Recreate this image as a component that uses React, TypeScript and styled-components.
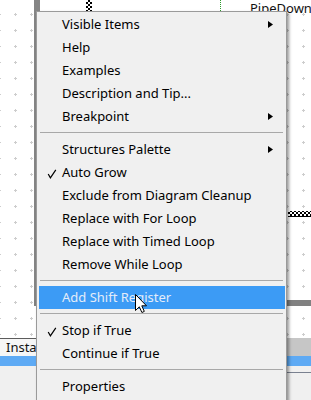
import React from 'react';
import styled, {createGlobalStyle} from "styled-components";

type Entry = {
    label?: string
    sub?: boolean
    checked?: boolean
    active?: boolean
    sep?: boolean
}

const entries: Entry[] = [
    {label: 'Visible Items', sub: true},
    {label: 'Help'},
    {label: 'Examples'},
    {label: 'Description and Tip...'},
    {label: 'Breakpoint', sub: true},
    {sep: true},
    {label: 'Structures Palette', sub: true},
    {label: 'Auto Grow', checked: true},
    {label: 'Exclude from Diagram Cleanup'},
    {label: 'Replace with For Loop'},
    {label: 'Replace with Timed Loop'},
    {label: 'Remove While Loop'},
    {sep: true},
    {label: 'Add Shift Register', active: true},
    {sep: true},
    {label: 'Stop if True', checked: true},
    {label: 'Continue if True'},
    {sep: true},
    {label: 'Properties'},
]

const CheckMark = () => (
    <CheckIcon width="10" height="10" viewBox="0 0 10 10">
        <path d="M1.2 5 L3.4 8.8 L8.8 0.8" fill="none" stroke="#000" strokeWidth="1.2"/>
    </CheckIcon>
)

const SubArrow = () => (
    <ArrowIcon width="5" height="7" viewBox="0 0 5 7">
        <path d="M0 0 L5 3.5 L0 7 Z" fill="#000"/>
    </ArrowIcon>
)

const MouseCursor = () => (
    <Cursor width="12" height="19" viewBox="0 0 12 19">
        <path d="M0.5 0.5 L0.5 16.5 L4.3 12.8 L6.9 18.5 L9.3 17.4 L6.8 11.8 L11.5 11.8 Z"
              fill="#fff" stroke="#000" strokeWidth="1" strokeLinejoin="miter"/>
    </Cursor>
)

// block diagram canvas: grid, while loop frame and wires
const DiagramDrawing = () => (
    <DrawingSvg width="311" height="338" viewBox="0 0 311 338">
        <defs>
            <pattern id="grid" width="16" height="16" patternUnits="userSpaceOnUse" x="7" y="6">
                <rect x="7" y="8" width="3" height="1" fill="#cdcdcd"/>
                <rect x="8" y="7" width="1" height="3" fill="#cdcdcd"/>
            </pattern>
            <pattern id="wire" width="4" height="4" patternUnits="userSpaceOnUse">
                <rect width="4" height="4" fill="#fff"/>
                <rect width="2" height="2" fill="#000"/>
                <rect x="2" y="2" width="2" height="2" fill="#000"/>
            </pattern>
        </defs>
        <rect width="311" height="338" fill="url(#grid)"/>

        <rect x="34" y="0" width="6" height="306" fill="#858585"/>
        <rect x="34" y="300" width="290" height="6" fill="#818181"/>

        <rect x="86" y="0" width="6" height="11" fill="url(#wire)"/>
        <rect x="288" y="211" width="23" height="5" fill="url(#wire)"/>
        <rect x="288" y="216" width="23" height="1" fill="#000"/>

        <line x1="220.5" y1="0" x2="220.5" y2="11" stroke="#2c9a2c" strokeDasharray="1 1"/>
    </DrawingSvg>
)

export default function App() {
    return (
        <StyledPage>
            <GlobalStyle/>
            <Canvas>
                <DiagramDrawing/>
                <NodeLabel>PipeDown</NodeLabel>
            </Canvas>

            <TabStrip>
                <Tab>Instance</Tab>
            </TabStrip>
            <ProgressBar/>
            <BottomPanel>
                <StatusBox/>
            </BottomPanel>

            <Menu>
                {entries.map((e, i) =>
                    e.sep ? <Separator key={i}/> : (
                        <MenuItem key={i} $active={e.active}>
                            {e.checked && <CheckMark/>}
                            {e.label}
                            {e.sub && <SubArrow/>}
                        </MenuItem>
                    )
                )}
            </Menu>

            <MouseCursor/>
        </StyledPage>
    );
}

const GlobalStyle = createGlobalStyle`
    html, body {
        margin: 0;
        padding: 0;
        background: #fff;
    }
    body {
        font-family: "Noto Sans", "Open Sans", sans-serif;
    }
`

const StyledPage = styled.div`
    position: relative;
    width: 311px;
    height: 400px;
    overflow: hidden;
    display: flex;
    flex-direction: column;
    font-size: 13px;
    color: #000;
`

const Canvas = styled.div`
    position: relative;
    height: 338px;
    flex-shrink: 0;
    background: #fff;
`

const DrawingSvg = styled.svg`
    display: block;
`

const NodeLabel = styled.span`
    position: absolute;
    left: 250px;
    top: -1px;
    font-size: 13px;
    line-height: 18px;
    color: #111;
`

const TabStrip = styled.div`
    display: flex;
    height: 18px;
    background: #c6c6c6;
`

const Tab = styled.div`
    width: 70px;
    box-sizing: border-box;
    border-top: 1px solid #5c5c5c;
    background: #f6f6f6;
    padding-left: 6px;
    font-size: 13px;
    line-height: 16px;
    color: #111;
`

const ProgressBar = styled.div`
    height: 10px;
    background: #5eaaf4;
`

const BottomPanel = styled.div`
    flex: 1;
    display: flex;
    justify-content: flex-end;
    background: #f0f0f0;
`

const StatusBox = styled.div`
    width: 120px;
    margin-top: 6px;
    border-top: 1px solid #7a8190;
`

const Menu = styled.div`
    position: absolute;
    left: 36px;
    top: 11px;
    width: 251px;
    box-sizing: border-box;
    padding: 1px 1px 2px 2px;
    background: #f0f0f0;
    border: 1px solid #9a9a9a;
    box-shadow: 2px 2px 3px rgba(0, 0, 0, 0.4);
`

const MenuItem = styled.div<{ $active?: boolean }>`
    position: relative;
    height: 23px;
    line-height: 23px;
    padding-left: 23px;
    white-space: nowrap;
    background: ${p => p.$active ? '#3c9bf5' : 'transparent'};
    color: ${p => p.$active ? '#e3ecf9' : '#000'};
`

const CheckIcon = styled.svg`
    position: absolute;
    left: 8px;
    top: 8px;
`

const ArrowIcon = styled.svg`
    position: absolute;
    right: 12px;
    top: 8px;
`

const Separator = styled.div`
    height: 10px;
    padding-top: 4px;
    box-sizing: border-box;

    &::after {
        content: '';
        display: block;
        height: 1px;
        margin: 0 2px 0 1px;
        background: #a8a8a8;
    }
`

const Cursor = styled.svg`
    position: absolute;
    left: 135px;
    top: 294px;
`
